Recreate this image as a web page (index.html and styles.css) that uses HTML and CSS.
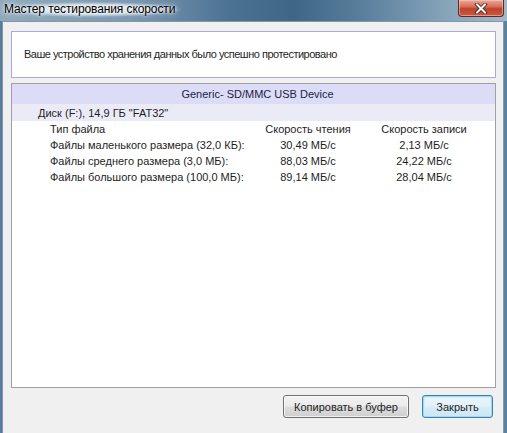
FILE: index.html
```html
<!DOCTYPE html>
<html>
<head>
<meta charset="utf-8">
<link rel="stylesheet" href="styles.css">
</head>
<body>
<div class="window">
  <div class="titlebar">
    <span class="title">Мастер тестирования скорости</span>
    <div class="close">
      <svg width="14" height="11" viewBox="0 0 14 11">
        <path d="M3 1.5 L11 9.5 M11 1.5 L3 9.5" stroke="#3a1a1a" stroke-width="3.6" stroke-linecap="square" fill="none"/>
        <path d="M3 1.5 L11 9.5 M11 1.5 L3 9.5" stroke="#ffffff" stroke-width="2" stroke-linecap="square" fill="none"/>
      </svg>
    </div>
  </div>
  <div class="client">
    <div class="message">Ваше устройство хранения данных было успешно протестировано</div>
    <div class="results">
      <div class="device">Generic- SD/MMC USB Device</div>
      <div class="disk">Диск (F:), 14,9 ГБ "FAT32"</div>
      <div class="table">
        <div class="lbl">Тип файла</div><div class="val">Скорость чтения</div><div class="val">Скорость записи</div>
        <div class="lbl">Файлы маленького размера (32,0 КБ):</div><div class="val">30,49 МБ/с</div><div class="val">2,13 МБ/с</div>
        <div class="lbl">Файлы среднего размера (3,0 МБ):</div><div class="val">88,03 МБ/с</div><div class="val">24,22 МБ/с</div>
        <div class="lbl">Файлы большого размера (100,0 МБ):</div><div class="val">89,14 МБ/с</div><div class="val">28,04 МБ/с</div>
      </div>
    </div>
    <div class="buttons">
      <button class="btn btn-copy">Копировать в буфер</button>
      <button class="btn btn-close">Закрыть</button>
    </div>
  </div>
  <div class="bottomframe"></div>
</div>
</body>
</html>
```
FILE: styles.css
```css
html, body {
  margin: 0;
  padding: 0;
  width: 507px;
  height: 433px;
  overflow: hidden;
  background: #5f86a6;
}
.window {
  width: 507px;
  height: 433px;
  display: flex;
  flex-direction: column;
  background: linear-gradient(90deg, #557d9d 0%, #6e92ae 50%, #5a819f 100%);
  font-family: "Liberation Sans", Arial, sans-serif;
}
.titlebar {
  height: 21px;
  flex: 0 0 21px;
  position: relative;
  background: linear-gradient(90deg, #90aabd 0%, #7c9ab2 25%, #4d7394 45%, #3f6686 58%, #5b809e 72%, #86a4ba 88%, #a2b8c8 100%);
}
.title {
  position: absolute;
  left: 4px;
  top: 2px;
  font-size: 12px;
  line-height: 15px;
  color: #000;
  padding: 0 6px 0 2px;
  margin-left: -2px;
  letter-spacing: -0.1px;
  background: radial-gradient(ellipse at center, rgba(235,242,247,0.85) 40%, rgba(235,242,247,0) 72%);
  text-shadow: 0 0 6px #fff, 0 0 3px #fff;
}
.close {
  position: absolute;
  left: 458px;
  top: 0;
  width: 44px;
  height: 16px;
  border: 1px solid #5a2b28;
  border-top: none;
  border-radius: 0 0 4px 4px;
  background: linear-gradient(180deg, #e9a99a 0%, #d7715e 40%, #c1412b 55%, #cd5a3f 100%);
  display: flex;
  align-items: center;
  justify-content: center;
  box-shadow: inset 0 0 0 1px rgba(255,210,200,0.5);
}
.client {
  flex: 0 0 auto;
  height: 398px;
  margin: 0 3px 0 2px;
  border: 1px solid #8497a8;
  background: #f0f0f0;
  padding: 9px 7px 9px 8px;
  display: flex;
  flex-direction: column;
}
.message {
  box-sizing: border-box;
  height: 47px;
  border: 1px solid #a9a9dc;
  background: #fff;
  display: flex;
  align-items: center;
  padding-left: 12px;
  padding-bottom: 1px;
  font-size: 11px;
  letter-spacing: -0.5px;
  color: #1e1e1e;
}
.results {
  margin-top: 5px;
  height: 305px;
  box-sizing: border-box;
  border: 1px solid #a0a0a0;
  background: #fff;
  font-size: 11px;
  color: #1e1e1e;
}
.device {
  height: 20px;
  line-height: 21px;
  background: #dcdcf6;
  text-align: center;
  color: #1c1c48;
  padding-left: 8px;
}
.disk {
  height: 17px;
  line-height: 18px;
  background: #ebebf8;
  padding-left: 26px;
}
.table {
  display: grid;
  grid-template-columns: 200px 116px 116px;
  grid-auto-rows: 16px;
  line-height: 16px;
  padding-left: 38px;
}
.lbl {
  white-space: nowrap;
}
.val {
  text-align: center;
  white-space: nowrap;
}
.buttons {
  margin-top: 7px;
  display: flex;
  justify-content: flex-end;
  gap: 13px;
  padding-right: 3px;
}
.btn {
  height: 23px;
  box-sizing: border-box;
  border: 1px solid #707070;
  border-radius: 3px;
  background: linear-gradient(180deg, #f2f2f2 0%, #ebebeb 48%, #dddddd 52%, #cfcfcf 100%);
  font-family: "Liberation Sans", Arial, sans-serif;
  font-size: 11px;
  color: #1e1e1e;
  padding: 0;
  box-shadow: inset 0 0 0 1px rgba(255,255,255,0.7);
}
.btn-copy {
  width: 126px;
}
.btn-close {
  width: 71px;
  border-color: #3c7fb1;
  box-shadow: inset 0 0 0 1px #9fdbf5, inset 0 0 0 2px rgba(200,236,250,0.6);
  background: linear-gradient(180deg, #eaf6fd 0%, #e3f1fa 48%, #d9ecf6 52%, #cde6f3 100%);
}
.bottomframe {
  flex: 1 1 auto;
  border-top: 1px solid #c9d6e1;
  background: linear-gradient(180deg, #3d6487 0px, #3d6487 1px, #6b8fab 1px, #6b8fab 100%);
}
```
